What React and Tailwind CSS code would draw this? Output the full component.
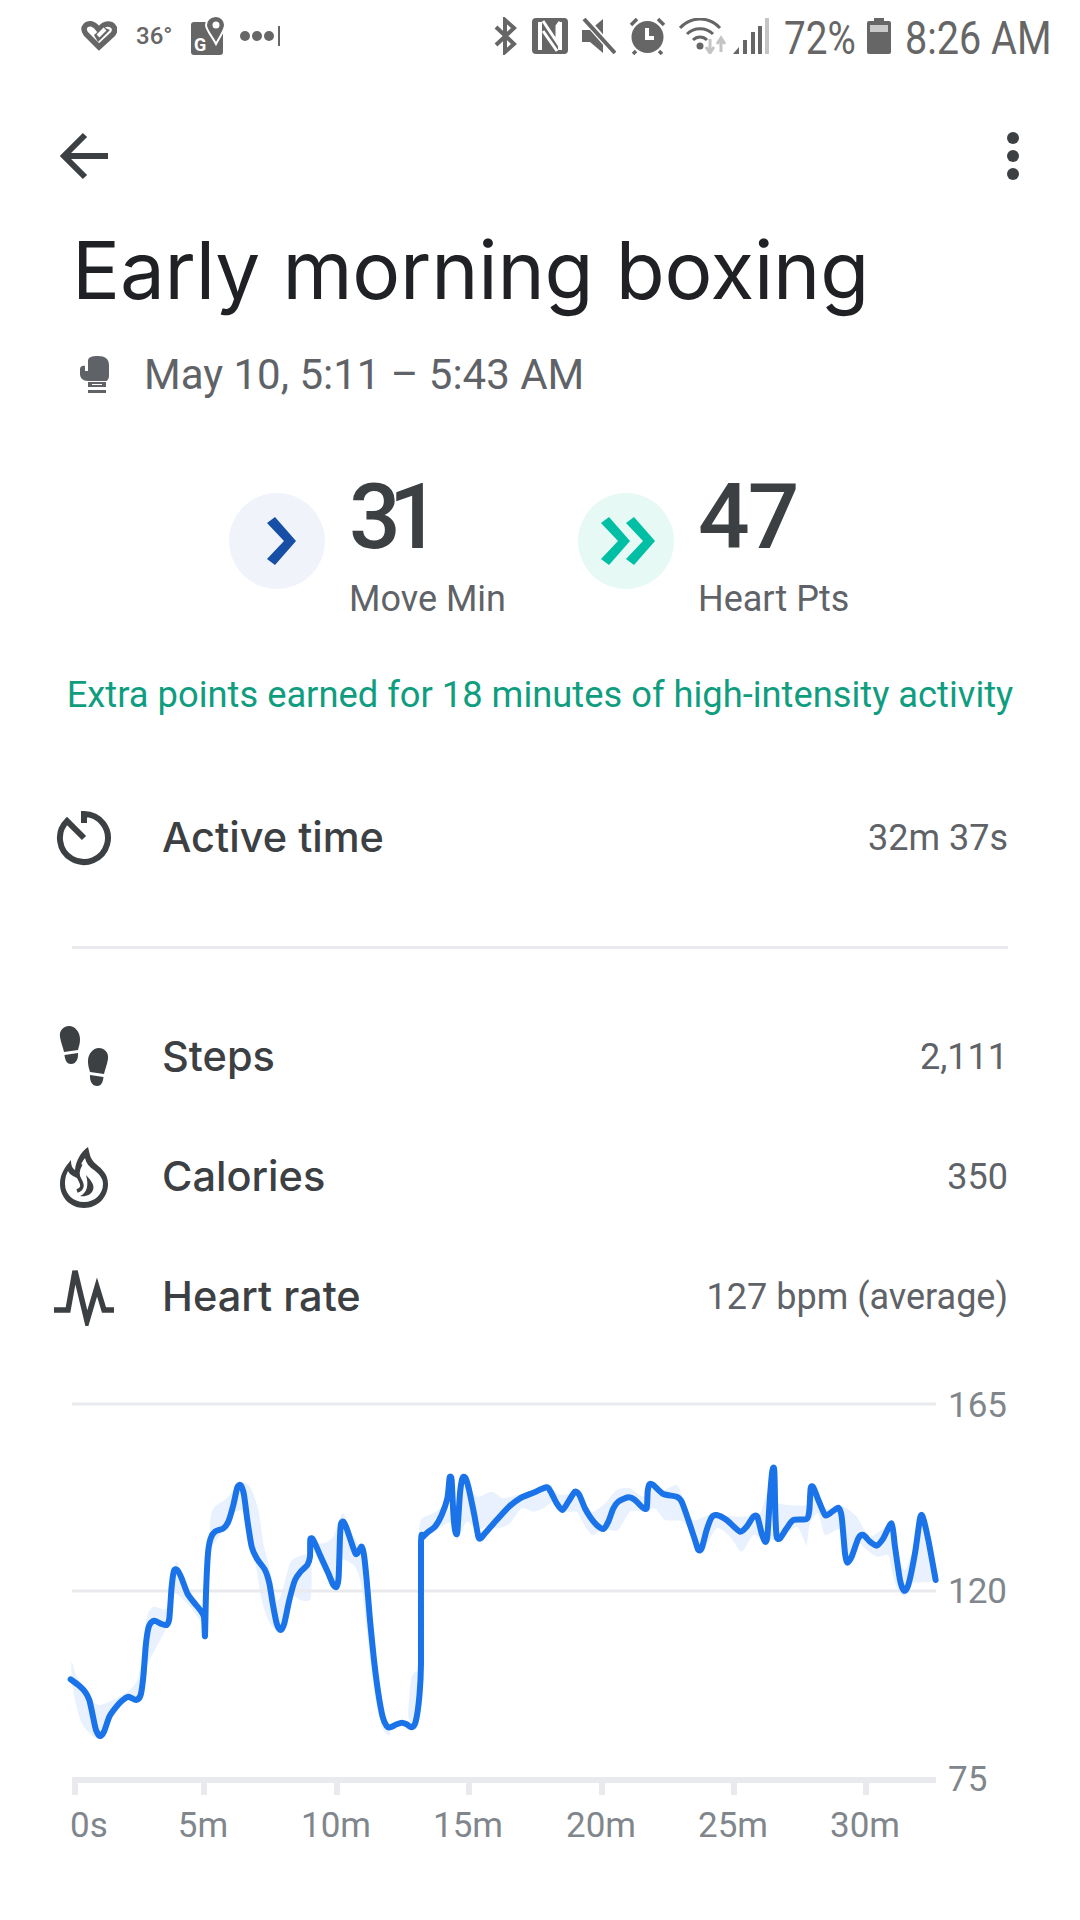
import React from 'react'

// heart rate trace, measured off the reference (1 unit = 1/3 px, chart top = 0)
const LINE = [
  [62,898],[85,915],[105,935],[118,960],[128,1005],[138,1050],[150,1068],[162,1055],[178,1010],[195,985],[215,963],[235,950],[258,960],[272,945],[280,890],[288,790],[297,738],[312,722],[335,732],[350,735],[358,715],[365,620],[372,572],[382,570],[395,595],[412,640],[430,665],[452,692],[462,712],[465,768],[468,640],[474,520],[482,475],[495,455],[520,445],[535,425],[550,375],[562,322],[572,316],[582,345],[592,420],[605,500],[620,535],[645,570],[658,610],[668,670],[680,730],[692,750],[703,730],[718,660],[735,600],[752,575],[772,555],[780,530],[781,478],[790,480],[810,525],[835,580],[850,615],[860,620],[866,590],[870,470],[873,432],[880,425],[890,445],[905,490],[917,522],[925,515],[935,500],[942,525],[950,600],[960,720],[972,840],[985,940],[998,1010],[1010,1038],[1020,1042],[1040,1033],[1055,1028],[1070,1033],[1085,1042],[1097,1025],[1108,950],[1113,850],[1113,490],[1120,470],[1135,455],[1155,440],[1175,405],[1192,355],[1198,300],[1200,290],[1205,300],[1210,400],[1216,455],[1222,455],[1230,340],[1237,295],[1245,292],[1255,320],[1272,400],[1285,470],[1292,475],[1305,460],[1340,420],[1375,382],[1410,355],[1450,338],[1490,322],
  [1502,335],[1520,370],[1537,390],[1555,365],[1575,335],[1588,345],[1605,385],[1620,410],[1640,435],[1660,447],[1675,425],[1690,385],[1705,365],[1735,352],[1755,360],[1775,380],[1790,385],[1793,335],[1798,313],[1810,315],[1840,342],[1880,350],[1895,365],[1915,420],[1935,480],[1945,510],[1955,505],[1970,450],[1985,412],[2000,405],[2030,420],[2070,455],[2090,440],[2110,410],[2122,410],[2135,460],[2145,485],[2152,470],[2160,350],[2167,272],[2173,272],[2176,400],[2180,470],[2190,475],[2210,445],[2230,420],[2270,417],[2278,390],[2282,325],[2290,322],[2305,360],[2325,405],[2340,400],[2365,383],[2375,410],[2385,520],[2392,548],[2405,530],[2425,475],[2440,465],[2460,485],[2480,497],[2500,475],[2525,430],[2535,500],[2550,600],[2562,632],[2575,615],[2595,520],[2610,415],[2618,410],[2635,480],[2657,600],
]

const BANDS = [
  [[65,845],[80,890],[110,930],[130,965],[150,975],[190,960],[245,925],[268,880],[290,715],[310,680],[345,688],[362,650],[378,545],[395,590],[430,650],[465,700],[465,740],[420,680],[370,640],[355,730],[320,800],[290,860],[270,950],[235,960],[190,990],[160,1070],[130,1070],[95,1030],[75,960],[65,900]],
  [[480,430],[490,385],[530,355],[570,308],[600,320],[625,390],[640,490],[660,570],[680,660],[695,640],[720,550],[745,530],[782,530],[782,655],[750,660],[725,650],[695,755],[660,730],[635,660],[620,570],[600,480],[580,395],[550,400],[530,435],[500,480],[480,500]],
  [[785,490],[820,490],[850,470],[878,400],[900,450],[925,495],[945,560],[960,700],[985,950],[1020,1060],[1000,1050],[975,950],[950,750],[935,620],[915,560],[870,540],[855,625],[830,590],[790,510]],
  [[1075,1010],[1085,890],[1110,880],[1110,980],[1095,1040]],
  [[1112,420],[1150,400],[1190,380],[1215,430],[1240,290],[1260,330],[1285,350],[1325,335],[1360,355],[1400,345],[1450,335],[1490,310],[1520,340],[1540,345],[1580,340],[1610,375],[1630,395],[1670,365],[1700,330],[1740,325],[1780,350],[1805,310],[1840,330],[1880,315],[1900,355],[1930,420],[1980,405],[2080,410],[2130,400],[2155,330],[2185,370],[2270,375],[2285,325],[2320,385],[2380,380],[2420,410],[2460,470],[2525,430],[2540,500],[2565,570],[2605,460],[2620,410],[2660,590],[2585,610],[2565,650],[2540,620],[2525,570],[2515,525],[2480,530],[2440,500],[2420,480],[2390,550],[2370,450],[2325,465],[2305,400],[2280,430],[2270,495],[2260,475],[2240,440],[2200,470],[2175,480],[2140,480],[2110,465],[2075,515],[2040,470],[2000,445],[1960,510],[1930,480],[1900,425],[1845,420],[1815,385],[1780,395],[1740,395],[1705,450],[1680,450],[1655,450],[1625,465],[1595,420],[1580,395],[1540,395],[1510,365],[1480,385],[1450,395],[1415,385],[1380,430],[1345,445],[1310,440],[1280,450],[1250,425],[1222,480],[1210,440],[1190,430],[1112,480]],
]

function smooth(pts, closed = false, k = 0.12) {
  const n = pts.length
  const at = i => closed ? pts[(i + n) % n] : pts[Math.max(0, Math.min(n - 1, i))]
  let d = `M${pts[0][0]} ${pts[0][1]}`
  for (let i = 0; i < (closed ? n : n - 1); i++) {
    const [p0, p1, p2, p3] = [at(i - 1), at(i), at(i + 1), at(i + 2)]
    d += `C${p1[0] + (p2[0] - p0[0]) * k} ${p1[1] + (p2[1] - p0[1]) * k} ${p2[0] - (p3[0] - p1[0]) * k} ${p2[1] - (p3[1] - p1[1]) * k} ${p2[0]} ${p2[1]}`
  }
  return closed ? d + 'Z' : d
}

const X_TICKS = [[75, '0s'], [204, '5m'], [337, '10m'], [469, '15m'], [602, '20m'], [734, '25m'], [866, '30m']]

function HeartIcon() {
  return (
    <svg width="36" height="30" viewBox="0 0 36 30" fill="none">
      <path d="M18 26 L5 13 C0 6 6 2 11 3 C14 4 16 6 18 9 C20 6 23 3 27 3 C32 3 36 8 32 13 Z" stroke="#666" strokeWidth="5.5" strokeLinejoin="miter" />
      <path d="M13 14 L22 6 L29 9 L17 21 Z" fill="#666" />
      <path d="M17 15 L24 8" stroke="#fff" strokeWidth="4" />
    </svg>
  )
}

function MapsIcon() {
  return (
    <svg width="34" height="38" viewBox="0 0 34 38" className="overflow-visible">
      <rect x="0" y="5" width="32" height="33" rx="3" fill="#666" />
      <path d="M25 -1 C18 -1 15 4 15 8 C15 13 21 19 25 27 C29 19 34 13 34 8 C34 4 31 -1 25 -1Z" fill="#666" stroke="#fff" strokeWidth="2" />
      <circle cx="25" cy="8" r="3.5" fill="#fff" />
      <text x="3" y="34" fontSize="18" fontWeight="700" fill="#fff" fontFamily="Roboto, sans-serif">G</text>
    </svg>
  )
}

function BluetoothIcon() {
  return (
    <svg width="23" height="38" viewBox="0 0 23 38" fill="none">
      <path d="M2 10 L20 27 L11 35 L11 3 L20 11 L2 28" stroke="#666" strokeWidth="4" />
    </svg>
  )
}

function NfcIcon() {
  return (
    <svg width="36" height="36" viewBox="0 0 36 36">
      <rect width="36" height="36" rx="4" fill="#666" />
      <path d="M6 4 H10 V32 H6 Z M26 4 H30 V32 H26 Z" fill="#fff" />
      <path d="M11 3 L25 24 V8 L28 4 M11 13 L25 33" stroke="#fff" strokeWidth="3" fill="none" />
    </svg>
  )
}

function MuteIcon() {
  return (
    <svg width="34" height="36" viewBox="0 0 34 36">
      <path d="M0 12 H8 L21 1 V35 L8 24 H0 Z" fill="#666" />
      <path d="M2 0 L32 34" stroke="#fff" strokeWidth="7" />
      <path d="M2 1 L33 35" stroke="#666" strokeWidth="4" />
    </svg>
  )
}

function AlarmIcon() {
  return (
    <svg width="37" height="38" viewBox="0 0 37 38">
      <circle cx="18.5" cy="20" r="16" fill="#666" />
      <path d="M2 8 L8 2 M35 8 L29 2 M7 34 L4 37 M30 34 L33 37" stroke="#666" strokeWidth="3.5" />
      <path d="M18 11 V21 H25" stroke="#fff" strokeWidth="4" fill="none" />
    </svg>
  )
}

function WifiIcon() {
  return (
    <svg width="48" height="36" viewBox="0 0 48 36" fill="none">
      <path d="M1 10 C12 -2 30 -2 41 10 M8 16 C15 9 27 9 34 16 M14 22 C18 18 24 18 28 22" stroke="#666" strokeWidth="3" />
      <circle cx="21" cy="28" r="3.5" fill="#666" />
      <path d="M31 21 V34 M27 29 L31 35 L35 29 M42 34 V22 M38 26 L42 20 L46 26" stroke="#c4c4c4" strokeWidth="3" />
    </svg>
  )
}

function SignalIcon() {
  return (
    <svg width="36" height="36" viewBox="0 0 36 36">
      <path d="M0 36 L6 29 V36 Z" fill="#666" />
      <rect x="10" y="22" width="4" height="14" fill="#666" />
      <rect x="18" y="14" width="4" height="22" fill="#666" />
      <rect x="25" y="8" width="4" height="28" fill="#666" />
      <rect x="32" y="0" width="4" height="36" fill="#c4c4c4" />
    </svg>
  )
}

function BatteryIcon() {
  return (
    <svg width="24" height="36" viewBox="0 0 24 36">
      <path d="M7 0 H17 V3 H22 A2 2 0 0 1 24 5 V34 A2 2 0 0 1 22 36 H2 A2 2 0 0 1 0 34 V5 A2 2 0 0 1 2 3 H7 Z" fill="#666" />
      <rect x="3" y="7" width="18" height="7" fill="#c8c8c8" />
    </svg>
  )
}

function StatusBar() {
  return (
    <div className="flex items-center h-[72px] pl-[81px] pr-[32px] text-[#666]">
      <HeartIcon />
      <span className="ml-[19px] w-[36px] text-[24px] font-medium leading-none">36°</span>
      <div className="ml-[19px]"><MapsIcon /></div>
      <div className="ml-[15px] flex items-center gap-[2px]">
        <span className="w-[10px] h-[10px] rounded-full bg-[#666]" />
        <span className="w-[10px] h-[10px] rounded-full bg-[#666]" />
        <span className="w-[10px] h-[10px] rounded-full bg-[#666]" />
        <span className="ml-[2px] w-[2px] h-[20px] bg-[#666]" />
      </div>
      <div className="ml-auto -translate-x-[2px]"><BluetoothIcon /></div>
      <div className="ml-[15px] -translate-x-[2px]"><NfcIcon /></div>
      <div className="ml-[14px] -translate-x-[2px]"><MuteIcon /></div>
      <div className="ml-[13px] -translate-x-[2px]"><AlarmIcon /></div>
      <div className="ml-[13px] -translate-x-[2px]"><WifiIcon /></div>
      <div className="ml-[6px] -translate-x-[2px]"><SignalIcon /></div>
      <span className="ml-[13px] mt-[4px] w-[69px] text-[46px] leading-none whitespace-nowrap origin-left scale-x-[0.84]">72%</span>
      <div className="ml-[14px]"><BatteryIcon /></div>
      <span className="ml-[14px] mt-[4px] w-[143px] text-[46px] leading-none whitespace-nowrap origin-left scale-x-[0.86]">8:26 AM</span>
    </div>
  )
}

function TimerIcon() {
  return (
    <svg width="56" height="56" viewBox="0 0 56 56" fill="none">
      <path d="M28 13 V4 A24 24 0 1 1 11 11 L28 28" stroke="#3c4043" strokeWidth="6" />
    </svg>
  )
}

function StepsIcon() {
  const print = (
    <g fill="#3c4043">
      <path d="M3 12 C2 5 7 1 12 1 C18 1 23 7 23 14 C23 19 22 21 21 25 L7 27 C6 22 4 18 3 12Z" />
      <path d="M7.5 30 L21 28 C21.5 34 19 39 14 39 C9 39 8 34 7.5 30Z" />
    </g>
  )
  return (
    <svg width="56" height="64" viewBox="0 0 56 64">
      <g transform="translate(1 0)">{print}</g>
      <g transform="translate(55 22) scale(-1 1)">{print}</g>
    </svg>
  )
}

function FlameIcon() {
  return (
    <svg width="48" height="61" viewBox="0 0 48 61">
      <path d="M28 0 C30 8 30 12 36 17 C42 22 48 27 48 37 C48 50 38 61 24 61 C10 61 0 50 0 37 C0 27 5 20 11 13 C11 18 12 21 15 23 C16 13 21 5 28 0Z" fill="#3c4043" />
      <path d="M25 11 C26 16 29 20 34 23 C39 27 43 31 43 37 C43 47 35 55 24 55 C13 55 5 47 5 37 C5 31 6 28 8 24 C9 26 11 28 13 29 L19 32 C19 23 20 17 25 11Z" fill="#fff" />
      <path d="M21 17 C17 24 17 28 20 33 C23 38 23 42 17 44" stroke="#3c4043" strokeWidth="3.5" fill="none" />
      <path d="M26 28 C30 33 35 37 33 43 C31 48 26 50 20 49 C27 46 29 38 26 28Z" fill="#3c4043" />
    </svg>
  )
}

function PulseIcon() {
  return (
    <svg width="60" height="58" viewBox="0 0 60 58" fill="none">
      <path d="M0 42 H14 L21 3 L33 53 L43 19 L50 42 H60" stroke="#3c4043" strokeWidth="5.5" strokeLinejoin="miter" />
    </svg>
  )
}

function GloveIcon() {
  return (
    <svg width="30" height="38" viewBox="0 0 30 38" fill="#5f6368">
      <path d="M8 5 C8 1 12 0 18 0 C25 0 29 3 29 9 V20 C29 23 27 25 26 25 H8 C3 25 0 22 0 18 V13 C0 11 2 9 5 10 V15 H8 Z" />
      <path d="M8 26 H26 V31 H8 Z M12 28 V29 H22 V28 Z" fillRule="evenodd" />
      <rect x="8" y="34" width="18" height="3" />
    </svg>
  )
}

function Row({ icon, label, value, className = '' }) {
  return (
    <div className={`flex items-center h-[60px] pl-[50px] pr-[72px] ${className}`}>
      <div className="w-[112px] flex items-center"><div className="w-[68px] flex justify-center">{icon}</div></div>
      <span className="font-['Inter',sans-serif] font-medium text-[41.5px] text-[#3c4043] leading-none">{label}</span>
      <span className="ml-auto text-[36px] text-[#5f6368] leading-none">{value}</span>
    </div>
  )
}

function Chart() {
  const textCls = "font-['Roboto',sans-serif]"
  return (
    <svg width="1080" height="500" viewBox="0 0 1080 500" className="block mt-[53px]">
      <g transform="translate(50 0) scale(0.33333)">
        {BANDS.map((b, i) => <path key={i} d={smooth(b, true)} fill="#1a73e8" fillOpacity="0.1" />)}
      </g>
      <rect x="72" y="22.5" width="864" height="3" fill="#e8eaed" />
      <rect x="72" y="209.5" width="864" height="3" fill="#e8eaed" />
      <rect x="72" y="397" width="864" height="6" fill="#e8eaed" />
      {X_TICKS.map(([x]) => <rect key={x} x={x - 3} y="397" width="6" height="18" fill="#e8eaed" />)}
      <g transform="translate(50 0) scale(0.33333)">
        <path d={smooth(LINE)} fill="none" stroke="#1a73e8" strokeWidth="18" strokeLinecap="round" strokeLinejoin="round" />
      </g>
      {X_TICKS.map(([x, t]) => (
        <text key={t} x={t === '0s' ? 70 : x - 1} y="457" textAnchor={t === '0s' ? 'start' : 'middle'} fontSize="35" fill="#80868b" className={textCls}>{t}</text>
      ))}
      <text x="948" y="37" fontSize="35" fill="#80868b" className={textCls}>165</text>
      <text x="948" y="223" fontSize="35" fill="#80868b" className={textCls}>120</text>
      <text x="948" y="411" fontSize="35" fill="#80868b" className={textCls}>75</text>
    </svg>
  )
}

export default function App() {
  return (
    <div className="w-[1080px] h-[1920px] bg-white overflow-hidden font-['Roboto',sans-serif]">
      <StatusBar />

      {/* toolbar */}
      <div className="flex items-center justify-between h-[72px] mt-[48px] pl-[60px] pr-[61px]">
        <svg width="48" height="48" viewBox="0 0 48 48" fill="none">
          <path d="M48 24 H4 M25 3 L4 24 L25 45" stroke="#3c4043" strokeWidth="6" />
        </svg>
        <div className="flex flex-col gap-[6px]">
          <span className="w-[12px] h-[12px] rounded-full bg-[#3c4043]" />
          <span className="w-[12px] h-[12px] rounded-full bg-[#3c4043]" />
          <span className="w-[12px] h-[12px] rounded-full bg-[#3c4043]" />
        </div>
      </div>

      <h1 className="mt-[30px] pl-[72px] h-[96px] font-['Inter',sans-serif] text-[80px] leading-[96px] tracking-[-0.2px] text-[#202124] whitespace-nowrap">Early morning boxing</h1>

      <div className="flex items-center h-[50px] mt-[32px] pl-[80px]">
        <GloveIcon />
        <span className="ml-[34px] text-[42px] leading-none text-[#5f6368]">May 10, 5:11 – 5:43 AM</span>
      </div>

      {/* goals */}
      <div className="flex h-[150px] mt-[59px] pl-[229px]">
        <div className="w-[96px] h-[96px] mt-[34px] rounded-full bg-[#f0f4fa] flex items-center justify-center">
          <svg width="29" height="48" viewBox="0 0 29 48" className="ml-[9px]"><path d="M0 6 L8 0 L29 24 L8 48 L0 42 L17 24 Z" fill="#174ea6" /></svg>
        </div>
        <div className="ml-[24px] w-[229px] pt-[8px]">
          <div className="text-[91px] leading-[100px] font-medium text-[#3c4043] tracking-[-12px]">31</div>
          <div className="mt-[7px] text-[36px] leading-[50px] text-[#5f6368]">Move Min</div>
        </div>
        <div className="w-[96px] h-[96px] mt-[34px] rounded-full bg-[#e6f9f5] flex items-center justify-center">
          <svg width="54" height="48" viewBox="0 0 54 48" className="ml-[4px]"><path d="M0 6 L8 0 L29 24 L8 48 L0 42 L17 24 Z M25 6 L33 0 L54 24 L33 48 L25 42 L42 24 Z" fill="#00bfa5" /></svg>
        </div>
        <div className="ml-[24px] pt-[8px]">
          <div className="text-[91px] leading-[100px] font-medium text-[#3c4043] tracking-[-2px]">47</div>
          <div className="mt-[7px] text-[36px] leading-[50px] text-[#5f6368]">Heart Pts</div>
        </div>
      </div>

      <p className="mt-[61px] text-center text-[36.3px] leading-[50px] text-[#0f9d80] whitespace-nowrap">Extra points earned for 18 minutes of high-intensity activity</p>

      <Row className="mt-[88px]" icon={<TimerIcon />} label="Active time" value="32m 37s" />
      <div className="mt-[78px] ml-[72px] w-[936px] h-[3px] bg-[#e8eaed]" />
      <Row className="mt-[78px]" icon={<StepsIcon />} label="Steps" value="2,111" />
      <Row className="mt-[60px]" icon={<FlameIcon />} label="Calories" value="350" />
      <Row className="mt-[60px]" icon={<PulseIcon />} label="Heart rate" value="127 bpm (average)" />

      <Chart />
    </div>
  )
}
